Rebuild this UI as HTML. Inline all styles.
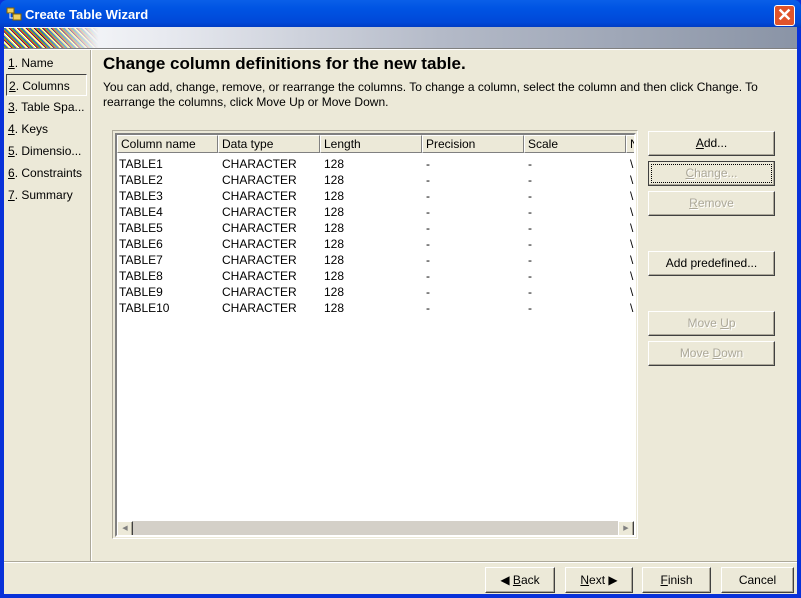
<!DOCTYPE html><html><head><style>
*{margin:0;padding:0;box-sizing:border-box}
body{width:801px;height:598px;overflow:hidden;background:#0831d9;font-family:"Liberation Sans",Tahoma,sans-serif;font-size:12px;position:relative}
.a{position:absolute}
.title{left:0;top:0;width:801px;height:28px;background:linear-gradient(#0a5fe8,#0054e3 30%,#0048d8 80%,#003ac0);color:#fff;font-weight:bold;font-size:13px;line-height:29px;padding-left:25px;border-radius:7px 7px 0 0}
.client{left:4px;top:27px;width:793px;height:567px;background:#ece9d8}
.banner{left:4px;top:27px;width:793px;height:21px;background:linear-gradient(90deg,#fff 0%,#e8eaf0 20%,#b4bac8 55%,#8a94a6 100%)}
.btn{position:absolute;border:1px solid;border-color:#fff #404040 #404040 #fff;box-shadow:inset -1px -1px #aca899;background:#ece9d8;text-align:center;font-size:12px;line-height:22px}
.dis{color:#aca899;text-shadow:1px 1px #fff}
u{text-decoration:underline}
.nav div{height:22px;line-height:22px;padding-left:4px;font-size:12px}
table{border-collapse:collapse;font-size:12px;table-layout:fixed;width:532px}
td{height:16px;padding-left:2px;white-space:nowrap;overflow:hidden}
.hd{position:absolute;top:0;height:18px;line-height:17px;padding-left:3px;border-right:1px solid #808080;border-bottom:1px solid #808080;border-left:1px solid #fff;border-top:1px solid #fff;background:#ece9d8}
</style></head><body>
<div class="a title">Create Table Wizard</div>
<svg class="a" style="left:6px;top:7px" width="16" height="15"><rect x="1" y="1" width="7" height="5" fill="#f0d060" stroke="#806000"/><rect x="7" y="7" width="8" height="6" fill="#f0d060" stroke="#806000"/><path d="M4 6v5h3" stroke="#fff" fill="none"/></svg>
<div class="a" style="left:774px;top:5px;width:21px;height:21px;border:1px solid #fff;border-radius:3px;background:#e0542a;color:#fff;font-size:18px;line-height:18px;text-align:center;font-weight:bold">✕</div>
<div class="a client"></div>
<div class="a banner"></div>
<div class="a" style="left:4px;top:28px;width:95px;height:20px;background:repeating-linear-gradient(45deg,#f00 0 1px,#0c0 1px 2px,#00f 2px 3px,#ff0 3px 4px,#fff 4px 5px,#000 5px 6px);-webkit-mask:linear-gradient(90deg,#000 40%,transparent);mask:linear-gradient(90deg,#000 40%,transparent);opacity:.8"></div>
<div class="a" style="left:4px;top:48px;width:793px;height:2px;border-top:1px solid #808080;border-bottom:1px solid #fff"></div>
<div class="a" style="left:90px;top:50px;width:2px;height:512px;border-left:1px solid #aca899;border-right:1px solid #fff"></div>
<div class="a nav" style="left:4px;top:52px;width:84px">
<div><u>1</u>. Name</div>
<div style="border:1px solid;border-color:#404040 #fff #fff #404040;margin:0 1px 0 2px;padding-left:2px"><u>2</u>. Columns</div>
<div><u>3</u>. Table Spa...</div>
<div><u>4</u>. Keys</div>
<div><u>5</u>. Dimensio...</div>
<div><u>6</u>. Constraints</div>
<div><u>7</u>. Summary</div>
</div>
<div class="a" style="left:103px;top:54px;font-size:17px;font-weight:bold">Change column definitions for the new table.</div>
<div class="a" style="left:103px;top:80px;width:680px;line-height:15px">You can add, change, remove, or rearrange the columns. To change a column, select the column and then click Change. To rearrange the columns, click Move Up or Move Down.</div>
<div class="a" style="left:112px;top:130px;width:526px;height:409px;border:1px solid;border-color:#aca899 #fff #fff #aca899"></div>
<div class="a" style="left:115px;top:133px;width:521px;height:404px;border:2px solid;border-color:#808080 #fff #fff #808080;background:#fff;overflow:hidden">
<div class="hd" style="left:0;width:101px">Column name</div>
<div class="hd" style="left:101px;width:102px">Data type</div>
<div class="hd" style="left:203px;width:102px">Length</div>
<div class="hd" style="left:305px;width:102px">Precision</div>
<div class="hd" style="left:407px;width:102px">Scale</div>
<div class="hd" style="left:509px;width:20px">N</div>
<table class="a" style="left:0;top:21px">
<colgroup><col style="width:103px"><col style="width:102px"><col style="width:102px"><col style="width:102px"><col style="width:102px"><col style="width:21px"></colgroup>
<tr><td>TABLE1</td><td>CHARACTER</td><td>128</td><td>-</td><td>-</td><td>\</td></tr>
<tr><td>TABLE2</td><td>CHARACTER</td><td>128</td><td>-</td><td>-</td><td>\</td></tr>
<tr><td>TABLE3</td><td>CHARACTER</td><td>128</td><td>-</td><td>-</td><td>\</td></tr>
<tr><td>TABLE4</td><td>CHARACTER</td><td>128</td><td>-</td><td>-</td><td>\</td></tr>
<tr><td>TABLE5</td><td>CHARACTER</td><td>128</td><td>-</td><td>-</td><td>\</td></tr>
<tr><td>TABLE6</td><td>CHARACTER</td><td>128</td><td>-</td><td>-</td><td>\</td></tr>
<tr><td>TABLE7</td><td>CHARACTER</td><td>128</td><td>-</td><td>-</td><td>\</td></tr>
<tr><td>TABLE8</td><td>CHARACTER</td><td>128</td><td>-</td><td>-</td><td>\</td></tr>
<tr><td>TABLE9</td><td>CHARACTER</td><td>128</td><td>-</td><td>-</td><td>\</td></tr>
<tr><td>TABLE10</td><td>CHARACTER</td><td>128</td><td>-</td><td>-</td><td>\</td></tr>
</table>
<div class="a" style="left:0;top:386px;width:517px;height:16px;background:#d4d0c8"></div>
<div class="btn" style="left:0;top:386px;width:16px;height:16px;font-size:7px;line-height:14px;color:#808080">◀</div>
<div class="btn" style="left:501px;top:386px;width:16px;height:16px;font-size:7px;line-height:14px;color:#808080">▶</div>
</div>
<div class="btn" style="left:648px;top:131px;width:127px;height:25px"><u>A</u>dd...</div>
<div class="btn dis" style="left:648px;top:161px;width:127px;height:25px;border-color:#404040;outline:1px dotted #000;outline-offset:-4px"><u>C</u>hange...</div>
<div class="btn dis" style="left:648px;top:191px;width:127px;height:25px"><u>R</u>emove</div>
<div class="btn" style="left:648px;top:251px;width:127px;height:25px">Add predefined...</div>
<div class="btn dis" style="left:648px;top:311px;width:127px;height:25px">Move <u>U</u>p</div>
<div class="btn dis" style="left:648px;top:341px;width:127px;height:25px">Move <u>D</u>own</div>
<div class="a" style="left:4px;top:561px;width:793px;height:2px;border-top:1px solid #aca899;border-bottom:1px solid #fff"></div>
<div class="btn" style="left:485px;top:567px;width:70px;height:26px;line-height:24px">◀ <u>B</u>ack</div>
<div class="btn" style="left:565px;top:567px;width:68px;height:26px;line-height:24px"><u>N</u>ext ▶</div>
<div class="btn" style="left:642px;top:567px;width:69px;height:26px;line-height:24px"><u>F</u>inish</div>
<div class="btn" style="left:721px;top:567px;width:73px;height:26px;line-height:24px">Cancel</div>
</body></html>
